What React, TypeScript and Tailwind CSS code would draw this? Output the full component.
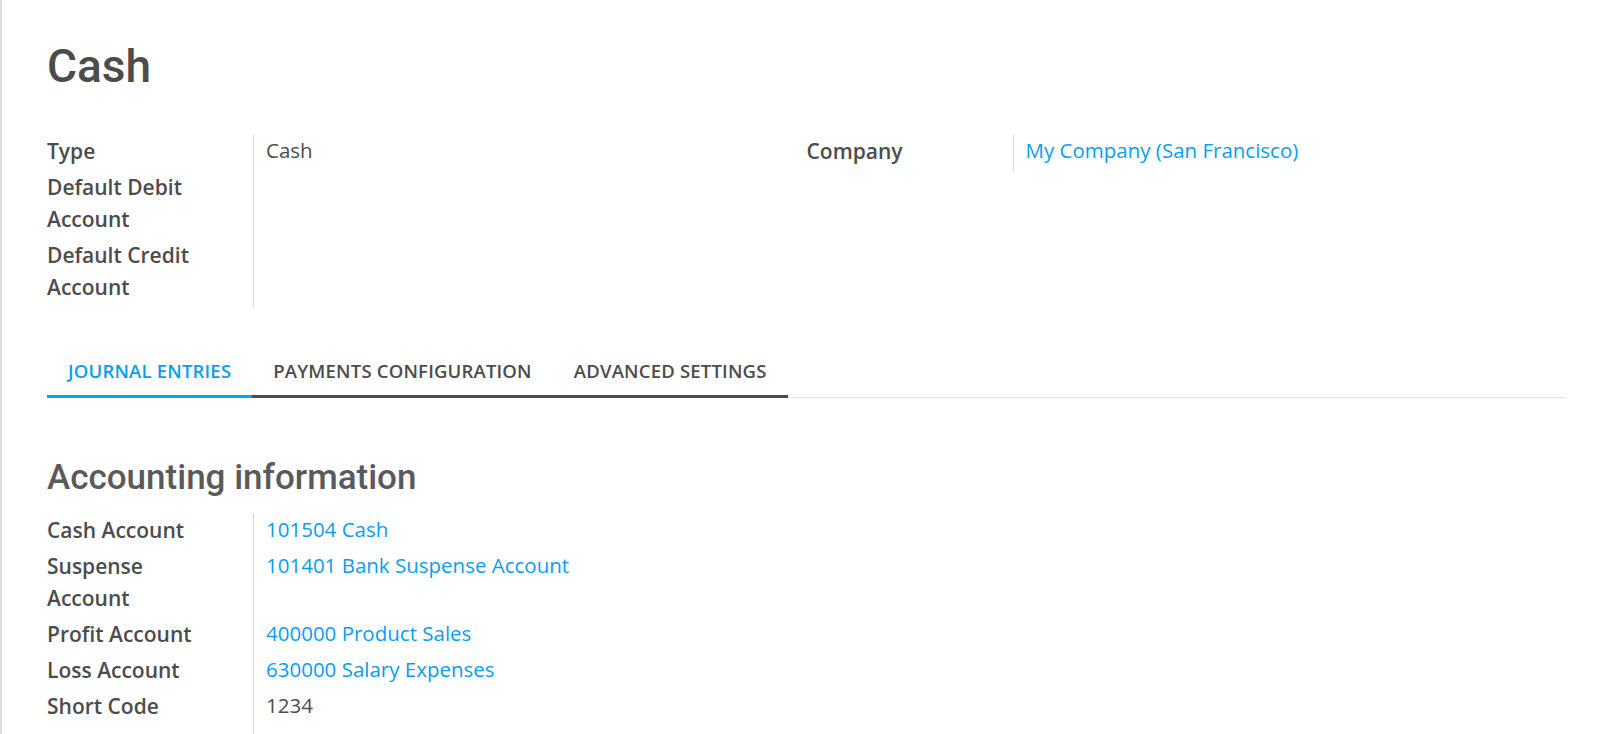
import React from 'react';

const font = { fontFamily: '"Open Sans", Roboto, sans-serif' };
const headFont = { fontFamily: 'Roboto, "Open Sans", sans-serif' };

type Field = { label: string[]; value?: string; link?: boolean };

const FieldGroup = ({ fields }: { fields: Field[] }) => (
  <div className="grid grid-cols-[206px_1fr] self-start">
    {fields.map((f, i) => (
      <React.Fragment key={i}>
        <div className="pb-1 text-[21px] leading-[32px] font-semibold text-[#4c4c4c]">
          {f.label.map((l, j) => (
            <div key={j}>{l}</div>
          ))}
        </div>
        <div
          className={`pb-1 pl-3 border-l border-[#d9d9d9] text-[20.5px] leading-[30px] ${
            f.link ? 'text-[#0b9df0]' : 'text-[#4c4c4c]'
          }`}
        >
          {f.value}
        </div>
      </React.Fragment>
    ))}
  </div>
);

const App = () => {
  const leftFields: Field[] = [
    { label: ['Type'], value: 'Cash' },
    { label: ['Default Debit', 'Account'] },
    { label: ['Default Credit', 'Account'] },
  ];

  const accountingFields: Field[] = [
    { label: ['Cash Account'], value: '101504 Cash', link: true },
    { label: ['Suspense', 'Account'], value: '101401 Bank Suspense Account', link: true },
    { label: ['Profit Account'], value: '400000 Product Sales', link: true },
    { label: ['Loss Account'], value: '630000 Salary Expenses', link: true },
    { label: ['Short Code'], value: '1234' },
    { label: ['Currency'], value: 'USD', link: true },
  ];

  const tabs = ['Journal Entries', 'Payments Configuration', 'Advanced Settings'];

  return (
    <div style={font} className="h-[734px] overflow-hidden bg-white border-l-2 border-[#dcdcdc]">
      <div className="pl-[45px] pr-[42px] pt-[40px]">
        {/* Title */}
        <h1 style={headFont} className="text-[46px] leading-[52px] font-medium text-[#4c4c4c]">
          Cash
        </h1>

        {/* Main groups */}
        <div className="grid grid-cols-2 items-start mt-[43px]">
          <FieldGroup fields={leftFields} />
          <FieldGroup fields={[{ label: ['Company'], value: 'My Company (San Francisco)', link: true }]} />
        </div>

        {/* Tabs */}
        <div className="mt-[45px] flex border-b border-[#dee2e6]">
          {tabs.map((t, i) => (
            <div
              key={t}
              className={`-mb-px px-[21px] pt-[9px] pb-[14px] text-[18.5px] leading-[20px] font-semibold tracking-[0.01em] uppercase border-b-[3px] ${
                i === 0 ? 'text-[#0b9df0] border-[#00a0ff]' : 'text-[#4c4c4c] border-[#4c4c4c]'
              }`}
            >
              {t}
            </div>
          ))}
        </div>

        {/* Accounting information */}
        <h2 style={headFont} className="mt-[60px] text-[35px] leading-[40px] font-medium text-[#5a5a5a]">
          Accounting information
        </h2>
        <div className="mt-[16px] w-1/2">
          <FieldGroup fields={accountingFields} />
        </div>
      </div>
    </div>
  );
};

export default App;
